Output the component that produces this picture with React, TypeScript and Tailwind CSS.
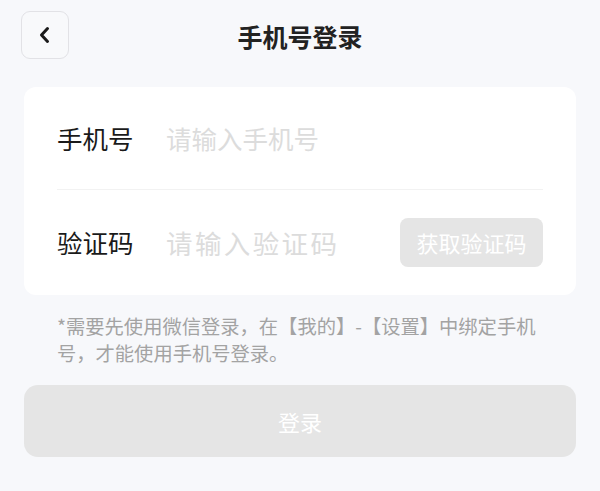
import React from "react";

export default function App() {
  const font = { fontFamily: '"Noto Sans CJK SC", "Noto Sans", sans-serif' };
  return (
    <div
      className="w-[600px] h-[491px] bg-[#f7f8fb] text-[#1a1a1a] overflow-hidden"
      style={font}
    >
      <div className="grid grid-cols-[1fr_auto_1fr] items-center h-[70px]">
        <div className="pl-[21px] flex">
          <button className="w-[48px] h-[48px] rounded-[9px] border border-[#e2e2e6] bg-[#f8f9fb] flex items-center justify-center text-[#1a1a1a]">
            <svg width="24" height="24" viewBox="0 0 24 24" fill="none">
              <polyline
                points="14.5 5.5 8.5 12 14.5 18.5"
                stroke="currentColor"
                strokeWidth="3"
                strokeLinecap="round"
                strokeLinejoin="round"
              />
            </svg>
          </button>
        </div>
        <div className="text-[25px] font-bold text-[#222] leading-none pt-[2px]">手机号登录</div>
        <div />
      </div>

      <div className="px-6">
        <div className="mt-[17px] bg-white rounded-[12px] px-[33px]">
          <div className="h-[103px] flex items-center border-b border-[#f2f2f2]">
            <span className="w-[109px] shrink-0 text-[25.5px]">手机号</span>
            <input
              className="flex-1 min-w-0 outline-none bg-transparent text-[25.5px] placeholder:text-[#dcdcdc]"
              placeholder="请输入手机号"
            />
          </div>
          <div className="h-[105px] flex items-center">
            <span className="w-[109px] shrink-0 text-[25.5px]">验证码</span>
            <input
              className="flex-1 min-w-0 outline-none bg-transparent text-[26.5px] tracking-[2.4px] placeholder:text-[#dcdcdc]"
              placeholder="请输入验证码"
            />
            <button className="shrink-0 w-[143px] h-[49px] rounded-[8px] bg-[#e5e5e5] text-white text-[22px] flex items-center justify-center">
              获取验证码
            </button>
          </div>
        </div>

        <p className="mt-[18px] px-[33px] text-[19.3px] leading-[27px] text-[#a3a3a3]">
          *需要先使用微信登录，在【我的】-【设置】中绑定手机号，才能使用手机号登录。
        </p>

        <button className="mt-[18px] w-full h-[72px] rounded-[14px] bg-[#e5e5e5] text-white text-[22px] flex items-center justify-center">
          登录
        </button>
      </div>
    </div>
  );
}
